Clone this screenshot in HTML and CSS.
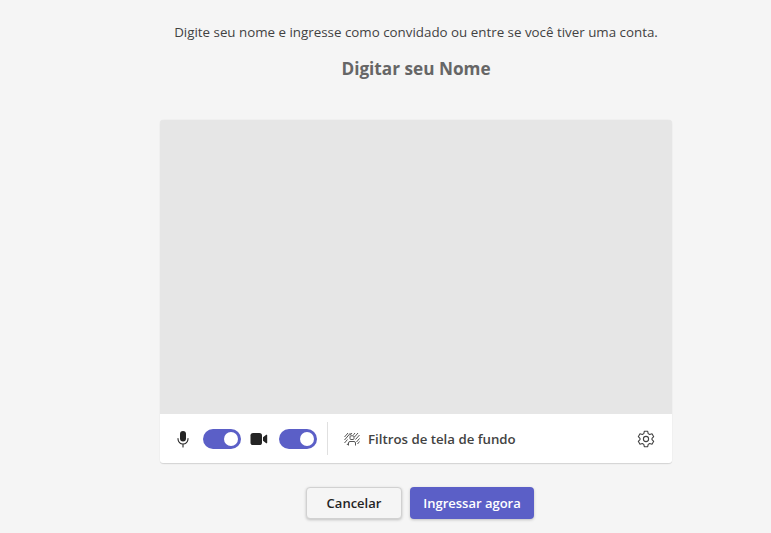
FILE: index.html
```html
<!DOCTYPE html>
<html lang="pt">
<head>
<meta charset="utf-8">
<title>Digitar seu Nome</title>
<link rel="stylesheet" href="styles.css">
</head>
<body>
<main class="panel">
  <p class="intro">Digite seu nome e ingresse como convidado ou entre se você tiver uma conta.</p>
  <h1 class="name">Digitar seu Nome</h1>
  <section class="card">
    <div class="preview"></div>
    <div class="bar">
      <svg class="icon mic" viewBox="0 0 16 20" width="16" height="20"><rect x="5" y="2" width="6" height="10.5" rx="3" fill="#242424"/><path d="M3 9.5v.5a5 5 0 0 0 10 0v-.5M8 15v3" fill="none" stroke="#242424" stroke-width="1.1" stroke-linecap="round"/></svg>
      <span class="toggle"><span class="knob"></span></span>
      <svg class="icon cam" viewBox="0 0 18 14" width="18" height="14"><rect x="0.5" y="1" width="11.5" height="12" rx="2.6" fill="#242424"/><path d="M13 5.2 16.2 2.8a.6.6 0 0 1 1 .5v7.4a.6.6 0 0 1-1 .5L13 8.8z" fill="#242424"/></svg>
      <span class="toggle"><span class="knob"></span></span>
      <span class="divider"></span>
      <svg class="icon filters" viewBox="0 0 16 14" width="16" height="14"><g fill="none" stroke="#555" stroke-width="1"><path d="M.5 5 4 1M.5 8 6.500 1M.5 11 3.500 7.500M3 13 4 11.500M8 1 6 3.300M11 1 9.500 2.800M14 1l-3.500 4M15.500 3l-4 4.500M15.500 6.500 12.500 10M15.500 9.500l-2 2.500"/><rect x="6" y="3.800" width="4" height="3.700" rx="1"/><path d="M4.500 13.500v-2.500a1.500 1.500 0 0 1 1.500-1.500h4a1.500 1.500 0 0 1 1.500 1.500v2.500"/></g></svg>
      <span class="filter-label">Filtros de tela de fundo</span>
      <svg class="icon gear" viewBox="0 0 20 20" width="20" height="20"><g fill="none" stroke="#424242" stroke-width="1.100" stroke-linejoin="round"><path d="M8.300 2.300h3.400l.5 2.300 1.500.9 2.300-.7 1.700 2.900-1.700 1.600v1.400l1.700 1.600-1.700 2.900-2.300-.7-1.500.9-.5 2.300H8.300l-.5-2.300-1.500-.9-2.300.7-1.700-2.900 1.700-1.600V9.300L2.300 7.700 4 4.800l2.300.7 1.500-.9z"/><circle cx="10" cy="10" r="2.600"/></g></svg>
    </div>
  </section>
  <div class="actions">
    <button class="btn cancel" type="button">Cancelar</button>
    <button class="btn join" type="button">Ingressar agora</button>
  </div>
</main>
</body>
</html>
```
FILE: styles.css
```css
* { box-sizing: border-box; }
html, body { height: 100%; }
body {
  margin: 0;
  background: #f5f5f5;
  font-family: "Open Sans", "Noto Sans", sans-serif;
  color: #424242;
  overflow: hidden;
}
.panel {
  width: 512px;
  margin-left: 160px;
  padding-top: 22px;
  display: flex;
  flex-direction: column;
  align-items: center;
}
.intro {
  margin: 0;
  font-size: 13.350px;
  line-height: 20px;
  white-space: nowrap;
}
.name {
  margin: 16px 0 0;
  font-size: 17.200px;
  line-height: 22px;
  font-weight: 700;
  color: #666666;
}
.card {
  width: 512px;
  margin-top: 40px;
  border-radius: 4px;
  overflow: hidden;
  border-bottom: 1px solid #d6d6d6;
  box-shadow: 0 0 1px rgba(0,0,0,.2);
}
.preview {
  height: 294px;
  background: #e6e6e6;
}
.bar {
  height: 49px;
  background: #ffffff;
  display: flex;
  align-items: center;
  padding: 0 16px 0 15px;
}
.icon { flex: none; display: block; }
.toggle {
  width: 38px;
  height: 20px;
  border-radius: 10px;
  background: #5b5fc7;
  display: flex;
  align-items: center;
  justify-content: flex-end;
  padding-right: 3px;
  flex: none;
}
.knob {
  width: 14px;
  height: 14px;
  border-radius: 50%;
  background: #ffffff;
}
.mic { margin-right: 12px; }
.cam { margin: 0 11px 0 9px; }
.divider {
  width: 1px;
  height: 33px;
  background: #e0e0e0;
  margin: 0 16px 0 10px;
}
.filters { margin-right: 8px; }
.filter-label {
  font-size: 13.250px;
  font-weight: 600;
  color: #424242;
  white-space: nowrap;
}
.gear { margin-left: auto; }
.actions {
  display: flex;
  gap: 8px;
  margin-top: 23px;
  padding-left: 8px;
}
.btn {
  height: 32px;
  border-radius: 4px;
  font-family: inherit;
  font-size: 13px;
  font-weight: 600;
  padding: 0;
  box-shadow: 0 1px 3px rgba(0,0,0,.22);
}
.cancel {
  width: 96px;
  background: #f5f5f5;
  border: 1px solid #d1d1d1;
  color: #242424;
}
.join {
  width: 124px;
  background: #5b5fc7;
  border: none;
  color: #ffffff;
}
```
